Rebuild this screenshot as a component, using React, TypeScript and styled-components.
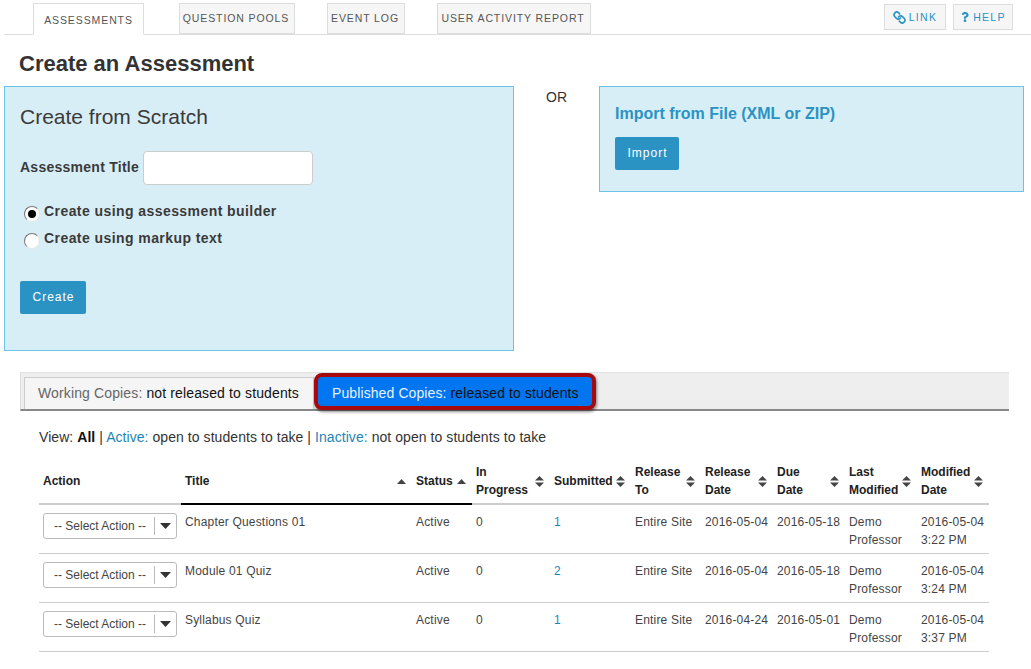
import React from "react";
import styled, { createGlobalStyle } from "styled-components";
import { FaQuestion } from "react-icons/fa";
import { LuLink } from "react-icons/lu";

const GlobalStyle = createGlobalStyle`
  html, body {
    margin: 0;
    padding: 0;
    background: #fff;
    font-family: "Liberation Sans", Arial, sans-serif;
    color: #333;
  }
`;

const Page = styled.div`
  width: 1031px;
  height: 669px;
  overflow: hidden;
`;

const TopNav = styled.nav`
  display: flex;
  align-items: flex-end;
  height: 35px;
  box-sizing: border-box;
  margin-left: 4px;
  padding-left: 29px;
  border-bottom: 1px solid #ddd;
`;

const NavTab = styled.div<{ $active?: boolean; $gap: number; $width: number }>`
  box-sizing: border-box;
  display: flex;
  align-items: center;
  justify-content: center;
  width: ${(p) => p.$width}px;
  height: ${(p) => (p.$active ? "32px" : "31px")};
  margin-right: ${(p) => p.$gap}px;
  margin-bottom: ${(p) => (p.$active ? "-1px" : "0")};
  padding: ${(p) => (p.$active ? "2px 0 0" : "0 2px 1px 0")};
  background: ${(p) => (p.$active ? "#fff" : "#f6f6f6")};
  border: 1px solid #ddd;
  border-bottom: ${(p) => (p.$active ? "1px solid #fff" : "1px solid #ddd")};
  font-size: 10.5px;
  letter-spacing: 0.9px;
  color: #555;
  white-space: nowrap;
`;

const NavActions = styled.div`
  display: flex;
  gap: 7px;
  margin-left: auto;
  margin-right: 18px;
  margin-bottom: 4px;
`;

const NavAction = styled.div<{ $width: number }>`
  box-sizing: border-box;
  display: flex;
  align-items: center;
  justify-content: center;
  gap: 3px;
  width: ${(p) => p.$width}px;
  height: 26px;
  background: #f6f6f6;
  border: 1px solid #ddd;
  font-size: 10.5px;
  letter-spacing: 1.3px;
  color: #2a93c4;
`;

const ChainIcon = styled(LuLink)`
  transform: scaleX(-1);
`;

const Heading = styled.h1`
  margin: 0;
  padding: 14px 0 0 19px;
  height: 37px;
  font-size: 22px;
  line-height: 30px;
  font-weight: 700;
  color: #333;
`;

const CreateRow = styled.div`
  display: flex;
  align-items: flex-start;
  margin-left: 4px;
  width: 1020px;
`;

const Panel = styled.section<{ $width: number; $height: number }>`
  box-sizing: border-box;
  width: ${(p) => p.$width}px;
  height: ${(p) => p.$height}px;
  padding: 14px 15px;
  background: #d8eef7;
  border: 1px solid #6cc3e6;
`;

const OrLabel = styled.div`
  width: 85px;
  padding-top: 3px;
  text-align: center;
  font-size: 14px;
  line-height: 16px;
  color: #333;
`;

const PanelTitle = styled.h2`
  margin: 0;
  font-size: 21px;
  line-height: 32px;
  font-weight: 400;
  color: #3a3a3a;
`;

const ImportTitle = styled.h3`
  margin: 1px 0 0;
  font-size: 16px;
  line-height: 24px;
  font-weight: 700;
  color: #2a93c4;
`;

const FieldRow = styled.div`
  display: flex;
  align-items: center;
  gap: 4px;
  margin-top: 18px;
`;

const BoldLabel = styled.label<{ $tight?: boolean }>`
  position: relative;
  top: -1px;
  font-size: 14px;
  font-weight: 700;
  letter-spacing: ${(p) => (p.$tight ? "0.26px" : "0.43px")};
  color: #3a3a3a;
`;

const TextBox = styled.div`
  box-sizing: border-box;
  width: 170px;
  height: 34px;
  background: #fff;
  border: 1px solid #ccc;
  border-radius: 4px;
`;

const RadioRow = styled.div`
  display: flex;
  align-items: center;
  gap: 4px;
  height: 27px;
  padding-left: 4px;
`;

const Radio = styled.span<{ $checked?: boolean }>`
  box-sizing: border-box;
  display: flex;
  align-items: center;
  justify-content: center;
  width: 16px;
  height: 16px;
  margin-top: 4px;
  background: #fff;
  border: 1px solid #e4e4e4;
  border-top-color: #777;
  border-left-color: #777;
  border-radius: 50%;
  &::after {
    content: "";
    display: ${(p) => (p.$checked ? "block" : "none")};
    width: 8px;
    height: 8px;
    border-radius: 50%;
    background: #000;
  }
`;

const RadioGroup = styled.div`
  margin-top: 13px;
`;

const PrimaryButton = styled.div<{ $top: number; $width: number }>`
  box-sizing: border-box;
  display: flex;
  align-items: center;
  justify-content: center;
  width: ${(p) => p.$width}px;
  height: 33px;
  margin-top: ${(p) => p.$top}px;
  padding: 0 0 2px 1px;
  background: #2a93c4;
  border-radius: 2px;
  font-size: 12px;
  letter-spacing: 1px;
  color: #fff;
`;

const TabBar = styled.div`
  box-sizing: border-box;
  display: flex;
  align-items: flex-end;
  width: 989px;
  height: 39px;
  margin: 21px 0 0 20px;
  padding-left: 3px;
  background: #eee;
  border-top: 1px solid #e2e2e2;
  border-left: 1px solid #ddd;
  border-bottom: 2px solid #888;
`;

const WorkingTab = styled.div`
  box-sizing: border-box;
  display: flex;
  align-items: center;
  width: 290px;
  height: 32px;
  padding: 0 0 2px 13px;
  background: #f5f5f5;
  border: 1px solid #ccc;
  border-bottom: none;
  font-size: 14px;
  letter-spacing: 0.13px;
  color: #666;
`;

const PublishedTab = styled.div`
  box-sizing: border-box;
  display: flex;
  align-items: center;
  width: 282px;
  height: 37px;
  margin-bottom: -1px;
  padding: 2px 0 0 14px;
  background: #0275f0;
  border: 4px solid #a60a0f;
  border-radius: 8px;
  box-shadow: 1px 2px 3px rgba(0, 0, 0, 0.45);
  font-size: 14px;
  letter-spacing: 0.1px;
  color: #e6f2ff;
`;

const Dark = styled.span`
  color: #111;
`;

const ViewLine = styled.div`
  margin: 18px 0 0 39px;
  height: 16px;
  font-size: 14px;
  line-height: 16px;
  letter-spacing: 0.06px;
  color: #333;
`;

const ViewLink = styled.span`
  color: #1d85b5;
`;

const Table = styled.table`
  table-layout: fixed;
  border-collapse: collapse;
  width: 950px;
  margin: 16px 0 0 39px;
  font-size: 12px;
`;

const Th = styled.th<{ $black?: boolean }>`
  box-sizing: border-box;
  height: 43px;
  padding: 0 6px 2px 4px;
  text-align: left;
  vertical-align: middle;
  font-size: 12px;
  line-height: 18px;
  font-weight: 700;
  color: #222;
  border-bottom: 2px solid ${(p) => (p.$black ? "#000" : "#ccc")};
`;

const ThInner = styled.div`
  display: flex;
  align-items: center;
  justify-content: space-between;
  gap: 2px;
`;

const ThLabel = styled.span`
  width: min-content;
`;

const SortMark = styled.svg`
  flex: none;
  fill: #444;
`;

const Td = styled.td`
  box-sizing: border-box;
  height: 49px;
  padding: 8px 4px 0;
  vertical-align: top;
  font-size: 12px;
  line-height: 18px;
  letter-spacing: 0.18px;
  color: #444;
  border-bottom: 1px solid #ccc;
`;

const ActionCell = styled(Td)`
  padding: 8px 4px 0;
  letter-spacing: 0;
`;

const CountLink = styled.span`
  color: #1d85b5;
`;

const SelectBox = styled.div`
  box-sizing: border-box;
  display: flex;
  align-items: center;
  width: 134px;
  height: 26px;
  background: #fff;
  border: 1px solid #bbb;
  border-radius: 3px;
  color: #444;
  font-size: 12px;
`;

const SelectText = styled.span`
  flex: 1;
  padding-left: 10px;
  white-space: nowrap;
`;

const SelectArrow = styled.span`
  display: flex;
  align-items: center;
  justify-content: center;
  width: 21px;
  height: 18px;
  border-left: 1px solid #bbb;
`;

const ArrowMark = styled.svg`
  fill: #333;
`;

const columns = [
  { label: "Action", width: 142 },
  { label: "Title", width: 231, sort: "up", black: true },
  { label: "Status", width: 60, sort: "up", black: true },
  { label: "In Progress", width: 78, sort: "both" },
  { label: "Submitted", width: 81, sort: "both" },
  { label: "Release To", width: 70, sort: "both" },
  { label: "Release Date", width: 72, sort: "both" },
  { label: "Due Date", width: 72, sort: "both" },
  { label: "Last Modified", width: 72, sort: "both" },
  { label: "Modified Date", width: 72, sort: "both" },
];

const rows = [
  { title: "Chapter Questions 01", submitted: 1, release: "2016-05-04", due: "2016-05-18", modified: "2016-05-04", time: "3:22 PM" },
  { title: "Module 01 Quiz", submitted: 2, release: "2016-05-04", due: "2016-05-18", modified: "2016-05-04", time: "3:24 PM" },
  { title: "Syllabus Quiz", submitted: 1, release: "2016-04-24", due: "2016-05-01", modified: "2016-05-04", time: "3:37 PM" },
];

const SortIcon = ({ kind }: { kind: string }) =>
  kind === "up" ? (
    <SortMark width="9" height="5" viewBox="0 0 9 5">
      <path d="M0 5 4.5 0 9 5z" />
    </SortMark>
  ) : (
    <SortMark width="9" height="11" viewBox="0 0 9 11">
      <path d="M0 4.5 4.5 0 9 4.5zM0 6.5h9L4.500 11z" />
    </SortMark>
  );

export default function App() {
  return (
    <Page>
      <GlobalStyle />
      <TopNav>
        <NavTab $active $gap={35} $width={111}>ASSESSMENTS</NavTab>
        <NavTab $gap={32} $width={116}>QUESTION POOLS</NavTab>
        <NavTab $gap={32} $width={78}>EVENT LOG</NavTab>
        <NavTab $gap={0} $width={154}>USER ACTIVITY REPORT</NavTab>
        <NavActions>
          <NavAction $width={62}><ChainIcon size={13} strokeWidth={3} />LINK</NavAction>
          <NavAction $width={60}><FaQuestion size={10} />HELP</NavAction>
        </NavActions>
      </TopNav>

      <Heading>Create an Assessment</Heading>

      <CreateRow>
        <Panel $width={510} $height={265}>
          <PanelTitle>Create from Scratch</PanelTitle>
          <FieldRow>
            <BoldLabel $tight>Assessment Title</BoldLabel>
            <TextBox />
          </FieldRow>
          <RadioGroup>
            <RadioRow>
              <Radio $checked />
              <BoldLabel>Create using assessment builder</BoldLabel>
            </RadioRow>
            <RadioRow>
              <Radio />
              <BoldLabel>Create using markup text</BoldLabel>
            </RadioRow>
          </RadioGroup>
          <PrimaryButton $top={29} $width={66}>Create</PrimaryButton>
        </Panel>
        <OrLabel>OR</OrLabel>
        <Panel $width={425} $height={106}>
          <ImportTitle>Import from File (XML or ZIP)</ImportTitle>
          <PrimaryButton $top={11} $width={64}>Import</PrimaryButton>
        </Panel>
      </CreateRow>

      <TabBar>
        <WorkingTab>Working Copies:&nbsp;<Dark>not released to students</Dark></WorkingTab>
        <PublishedTab>Published Copies:&nbsp;<Dark>released to students</Dark></PublishedTab>
      </TabBar>

      <ViewLine>
        View: <Dark as="b">All</Dark> | <ViewLink>Active:</ViewLink> open to students to take | <ViewLink>Inactive:</ViewLink> not open to students to take
      </ViewLine>

      <Table>
        <colgroup>
          {columns.map((c) => (
            <col key={c.label} style={{ width: c.width }} />
          ))}
        </colgroup>
        <thead>
          <tr>
            {columns.map((c) => (
              <Th key={c.label} $black={c.black}>
                <ThInner>
                  <ThLabel>{c.label}</ThLabel>
                  {c.sort && <SortIcon kind={c.sort} />}
                </ThInner>
              </Th>
            ))}
          </tr>
        </thead>
        <tbody>
          {rows.map((r) => (
            <tr key={r.title}>
              <ActionCell>
                <SelectBox>
                  <SelectText>-- Select Action --</SelectText>
                  <SelectArrow>
                    <ArrowMark width="11" height="6" viewBox="0 0 11 6">
                      <path d="M0 0h11L5.500 6z" />
                    </ArrowMark>
                  </SelectArrow>
                </SelectBox>
              </ActionCell>
              <Td>{r.title}</Td>
              <Td>Active</Td>
              <Td>0</Td>
              <Td><CountLink>{r.submitted}</CountLink></Td>
              <Td>Entire Site</Td>
              <Td>{r.release}</Td>
              <Td>{r.due}</Td>
              <Td>Demo Professor</Td>
              <Td>{r.modified}<br />{r.time}</Td>
            </tr>
          ))}
        </tbody>
      </Table>
    </Page>
  );
}
